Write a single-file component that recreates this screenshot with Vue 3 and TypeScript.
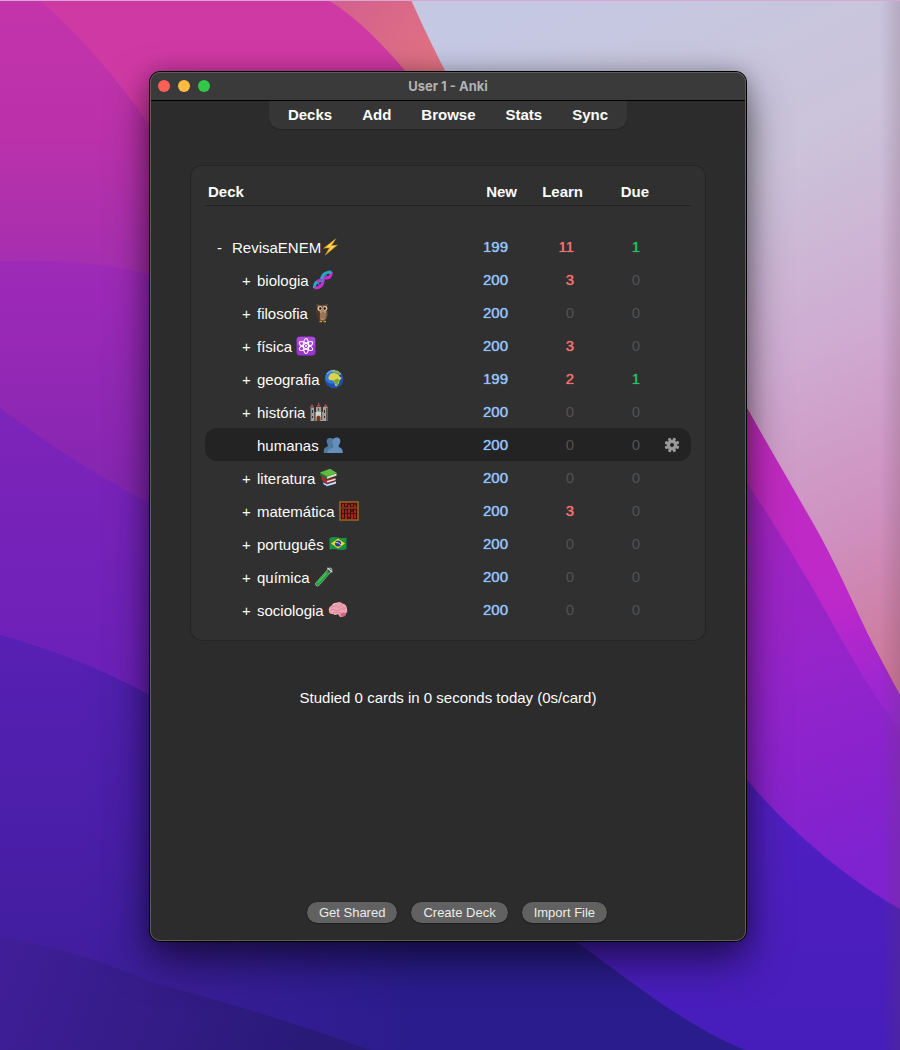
<script setup lang="ts">
import { ref } from 'vue'

interface Deck {
  name: string
  icon: string
  toggle: string
  depth: number
  fresh: number
  learn: number
  due: number
}

const menu = ['Decks', 'Add', 'Browse', 'Stats', 'Sync']
const actions = ['Get Shared', 'Create Deck', 'Import File']

const decks: Deck[] = [
  { name: 'RevisaENEM', icon: 'bolt', toggle: '-', depth: 0, fresh: 199, learn: 11, due: 1 },
  { name: 'biologia', icon: 'dna', toggle: '+', depth: 1, fresh: 200, learn: 3, due: 0 },
  { name: 'filosofia', icon: 'owl', toggle: '+', depth: 1, fresh: 200, learn: 0, due: 0 },
  { name: 'física', icon: 'atom', toggle: '+', depth: 1, fresh: 200, learn: 3, due: 0 },
  { name: 'geografia', icon: 'globe', toggle: '+', depth: 1, fresh: 199, learn: 2, due: 1 },
  { name: 'história', icon: 'castle', toggle: '+', depth: 1, fresh: 200, learn: 0, due: 0 },
  { name: 'humanas', icon: 'people', toggle: '', depth: 1, fresh: 200, learn: 0, due: 0 },
  { name: 'literatura', icon: 'books', toggle: '+', depth: 1, fresh: 200, learn: 0, due: 0 },
  { name: 'matemática', icon: 'abacus', toggle: '+', depth: 1, fresh: 200, learn: 3, due: 0 },
  { name: 'português', icon: 'flag', toggle: '+', depth: 1, fresh: 200, learn: 0, due: 0 },
  { name: 'química', icon: 'tube', toggle: '+', depth: 1, fresh: 200, learn: 0, due: 0 },
  { name: 'sociologia', icon: 'brain', toggle: '+', depth: 1, fresh: 200, learn: 0, due: 0 },
]

const active = ref('humanas')
const teeth = [0, 45, 90, 135, 180, 225, 270, 315]
</script>

<template>
  <div class="desktop">
    <svg class="wallpaper" viewBox="0 0 900 1050" preserveAspectRatio="none" aria-hidden="true">
      <defs>
        <linearGradient id="w-a" gradientUnits="userSpaceOnUse" x1="0" y1="0" x2="0" y2="275">
          <stop offset="0" stop-color="#c434ab" />
          <stop offset="0.5" stop-color="#ba31aa" />
          <stop offset="1" stop-color="#a42fb0" />
        </linearGradient>
        <linearGradient id="w-b" gradientUnits="userSpaceOnUse" x1="0" y1="261" x2="0" y2="500">
          <stop offset="0" stop-color="#9f2ab8" />
          <stop offset="1" stop-color="#8426b0" />
        </linearGradient>
        <linearGradient id="w-c" gradientUnits="userSpaceOnUse" x1="0" y1="408" x2="0" y2="695">
          <stop offset="0" stop-color="#7e24ba" />
          <stop offset="1" stop-color="#6a20b8" />
        </linearGradient>
        <linearGradient id="w-d" gradientUnits="userSpaceOnUse" x1="0" y1="635" x2="0" y2="980">
          <stop offset="0" stop-color="#5820b4" />
          <stop offset="0.6" stop-color="#4a1ea8" />
          <stop offset="1" stop-color="#3f1e9c" />
        </linearGradient>
        <linearGradient id="w-shade" gradientUnits="userSpaceOnUse" x1="80" y1="0" x2="420" y2="0">
          <stop offset="0" stop-color="#2a1c8c" stop-opacity="0" />
          <stop offset="1" stop-color="#2a1c8c" />
        </linearGradient>
        <linearGradient id="w-e" gradientUnits="userSpaceOnUse" x1="0" y1="940" x2="300" y2="1050">
          <stop offset="0" stop-color="#401e98" />
          <stop offset="1" stop-color="#291a78" />
        </linearGradient>
        <linearGradient id="w-sky" gradientUnits="userSpaceOnUse" x1="560" y1="0" x2="880" y2="700">
          <stop offset="0" stop-color="#c5c8e3" />
          <stop offset="0.3" stop-color="#cbc3d9" />
          <stop offset="0.55" stop-color="#cfabd2" />
          <stop offset="0.78" stop-color="#cf90c0" />
          <stop offset="1" stop-color="#cd7595" />
        </linearGradient>
        <linearGradient id="w-mag" gradientUnits="userSpaceOnUse" x1="747" y1="408" x2="900" y2="730">
          <stop offset="0" stop-color="#c22cbc" />
          <stop offset="0.6" stop-color="#bd28ca" />
          <stop offset="1" stop-color="#8e26d4" />
        </linearGradient>
        <linearGradient id="w-pur" gradientUnits="userSpaceOnUse" x1="747" y1="500" x2="860" y2="860">
          <stop offset="0" stop-color="#a425c0" />
          <stop offset="0.5" stop-color="#9424cb" />
          <stop offset="1" stop-color="#7f22d0" />
        </linearGradient>
        <linearGradient id="w-blue" x1="0" y1="0" x2="0" y2="1">
          <stop offset="0" stop-color="#5420c4" />
          <stop offset="1" stop-color="#461dba" />
        </linearGradient>
        <linearGradient id="w-coral" gradientUnits="userSpaceOnUse" x1="340" y1="0" x2="440" y2="60">
          <stop offset="0" stop-color="#d4608e" />
          <stop offset="1" stop-color="#e07282" />
        </linearGradient>
        <linearGradient id="w-edge" x1="0" y1="0" x2="1" y2="0">
          <stop offset="0" stop-color="#604050" stop-opacity="0" />
          <stop offset="1" stop-color="#604050" stop-opacity="0.2" />
        </linearGradient>
      </defs>
      <rect width="900" height="1050" fill="url(#w-a)" />
      <path d="M40 0Q100 54 150 126L300 340H500V0Z" fill="#cf39a4" />
      <path d="M328 0C358 18 382 44 408 74H500V0Z" fill="url(#w-coral)" />
      <path d="M0 261Q90 258 150 275L600 420V1050H0Z" fill="url(#w-b)" />
      <path d="M0 408Q80 468 150 503L600 700V1050H0Z" fill="url(#w-c)" />
      <path d="M0 635Q75 655 150 695L600 840V1050H0Z" fill="url(#w-d)" />
      <path d="M0 635Q75 655 150 695L600 840L760 1050H0Z" fill="url(#w-shade)" />
      <path d="M0 938Q80 950 150 982Q260 1010 370 1050H0Z" fill="url(#w-e)" />
      <path d="M411 0C422 24 434 50 452 84L747 408L900 695V0Z" fill="url(#w-sky)" />
      <path d="M700 330L747 408L817 530C850 590 872 650 900 695V760H700Z" fill="url(#w-mag)" />
      <path d="M700 420L747 483Q782 535 812 587C842 640 868 690 900 730V930H700Z" fill="url(#w-pur)" />
      <path d="M560 700L747 780C785 825 840 875 900 909V1050H745C680 1023 630 980 575 941Z" fill="url(#w-blue)" />
      <rect x="880" width="20" height="1050" fill="url(#w-edge)" />
      <rect width="900" height="1" fill="#d8a8d4" />
    </svg>

    <section class="window">
      <header class="titlebar">
        <div class="lights">
          <button class="light close" aria-label="Close"></button>
          <button class="light minimize" aria-label="Minimize"></button>
          <button class="light zoom" aria-label="Zoom"></button>
        </div>
        <h1 class="title">User 1 - Anki</h1>
      </header>

      <nav class="menu">
        <a v-for="item in menu" :key="item" href="#">{{ item }}</a>
      </nav>

      <main class="content">
        <div class="card">
          <table>
            <colgroup>
              <col />
              <col class="col-new" />
              <col class="col-count" />
              <col class="col-count" />
              <col class="col-gear" />
            </colgroup>
            <thead>
              <tr>
                <th class="deck-head" scope="col">Deck</th>
                <th scope="col">New</th>
                <th scope="col">Learn</th>
                <th scope="col">Due</th>
                <td></td>
              </tr>
            </thead>
            <tbody>
              <tr class="spacer" aria-hidden="true"><td colspan="5"></td></tr>
              <tr
                v-for="deck in decks"
                :key="deck.name"
                :class="{ active: deck.name === active }"
                @mouseenter="active = deck.name"
              >
                <td>
                  <div class="deck" :class="{ child: deck.depth > 0 }">
                    <span class="toggle-slot">
                      <button v-if="deck.toggle" class="toggle" :aria-label="'Toggle ' + deck.name">{{ deck.toggle }}</button>
                    </span>
                    <a href="#" :class="{ spaced: deck.depth > 0 }">
                      <span>{{ deck.name }}</span>
                      <svg viewBox="0 0 20 20" aria-hidden="true">
                        <template v-if="deck.icon === 'bolt'">
                          <path d="M15.500 1L2 11.500L8 11L3.500 19L17 7.800L10.800 8.400Z" fill="#f0a020" />
                          <path d="M14 2.500L4.500 10.500L10.200 10L6.800 15.600L14.800 8.600L9 9.300Z" fill="#ffd95e" />
                        </template>
                        <template v-else-if="deck.icon === 'dna'">
                          <path d="M1.500 17Q2 11.500 8 10.500T18 3Q17 8 11.500 9.500T1.500 17Z" fill="#2b3f86" />
                          <path d="M4 12.500L7.500 16M12 4.500L15.500 8" stroke="#8b44d0" stroke-width="1.600" />
                          <path d="M1.500 18C1 12.500 4.500 10.800 8.500 10.500" fill="none" stroke="#1fb0c4" stroke-width="3" />
                          <path d="M1.500 18C7.500 18 10 15 10.200 10.500C10.400 7 12 8 14 8S18 6 18.500 2" fill="none" stroke="#c82ed0" stroke-width="3" />
                          <path d="M8 11.500C8.800 7 10 2 18.500 2" fill="none" stroke="#25a9c2" stroke-width="3.200" />
                          <path d="M4 11.800Q6 9.500 9.500 10" fill="none" stroke="#c82ed0" stroke-width="2.400" />
                        </template>
                        <template v-else-if="deck.icon === 'owl'">
                          <path d="M4.500 1L8 2H12L15.500 1L15 7Q17 13 13 18H8Q3 12 5 6Z" fill="#74513a" />
                          <path d="M8 8H14Q15 14 12 17H9Q6.500 13 8 8Z" fill="#b08f6a" />
                          <path d="M9 10V15M11 9V16M13 10V15" stroke="#6e5039" stroke-width="0.800" />
                          <path d="M5 7Q3 14 7.500 18L8 10Z" fill="#4c3224" />
                          <circle cx="8" cy="5.500" r="2.400" fill="#dbc5a3" />
                          <circle cx="13" cy="5.500" r="2.400" fill="#dbc5a3" />
                          <circle cx="8.300" cy="5.500" r="1.200" fill="#20140e" />
                          <circle cx="12.700" cy="5.500" r="1.200" fill="#20140e" />
                          <path d="M10 6.500H11.200L10.500 8.500Z" fill="#d8a93c" />
                          <path d="M7.500 18.700H10M11.500 18.700H14" stroke="#c99a4a" stroke-width="1.200" />
                        </template>
                        <template v-else-if="deck.icon === 'atom'">
                          <rect x="0.500" y="0.500" width="19" height="19" rx="3.500" fill="#9c35cf" />
                          <rect x="1" y="1" width="18" height="9" rx="3" fill="#ad4cdb" />
                          <g fill="none" stroke="#fff" stroke-width="1.100">
                            <ellipse cx="10" cy="10" rx="2.500" ry="7.500" />
                            <ellipse cx="10" cy="10" rx="2.500" ry="7.500" transform="rotate(60 10 10)" />
                            <ellipse cx="10" cy="10" rx="2.500" ry="7.500" transform="rotate(120 10 10)" />
                          </g>
                          <circle cx="10" cy="10" r="1.100" fill="#fff" />
                        </template>
                        <template v-else-if="deck.icon === 'globe'">
                          <circle cx="10" cy="10" r="9.300" fill="#1f4fb0" />
                          <circle cx="8" cy="8" r="6.800" fill="#3279d8" />
                          <path d="M5 7L6.500 4.500L10 4L14 5L15.500 7.500L17.800 9L15.500 11.500L15 14L12.800 17.300L11 16.500L10.300 12.500L8.500 11.300L5.500 11L4.200 9Z" fill="#dcd24e" />
                          <path d="M10 11L14 9.500L15 12L12.800 16.500L11.200 15Z" fill="#6aa844" />
                          <path d="M7 3L10 1.200L14 1.800L17.500 5L15.800 6.200L13.500 4.200L10 3.500Z" fill="#8fb54e" />
                          <path d="M3 5Q6 1 11 1.200" fill="none" stroke="#a9d0f5" stroke-width="0.800" />
                        </template>
                        <template v-else-if="deck.icon === 'castle'">
                          <path d="M1 5.500H5V10H7V5H12V10H14V5H18.500V19H1Z" fill="#a5a19d" />
                          <path d="M1 5.500H2.200V19H1ZM5 9H6.500V19H5ZM12 5H13.200V18H12ZM17 6H18.500V19H17Z" fill="#5c5855" />
                          <path d="M7 10H12V19H7Z" fill="#d5d1cb" />
                          <path d="M7.500 19V15Q9.500 12 11.500 15V19Z" fill="#793817" />
                          <path d="M5.200 6H6.800V10H5.200ZM12.500 3H13.500V9H12.500Z" fill="#303030" />
                          <path d="M3 5V2M9.500 4V0.500M16.500 5V2" stroke="#767270" stroke-width="0.700" />
                          <path d="M1 5H5L3 2.500ZM7.500 4.500H12L9.800 1.500ZM14.500 5H19L16.500 2Z" fill="#bc4544" />
                          <path d="M3.500 8V11M9.500 6.500V8.500M15.500 8V11M3.500 14V16M15.500 14V16" stroke="#37322f" stroke-width="1.100" />
                        </template>
                        <template v-else-if="deck.icon === 'people'">
                          <path d="M6.500 3C10 2.500 11 5 10.500 7.500Q10 9.500 9.500 11H14V18H0.800Q0 12.800 4.200 11.800Q5.500 11 4.500 9.500Q2 3.500 6.500 3Z" fill="#52799f" />
                          <path d="M13 2.500C17 2.200 18 4.800 17 8Q16 10 15.500 11Q15.500 12 17 12.500Q19.800 13.500 19.800 18H4Q4 13.800 8 13Q10.500 12.500 10 11Q7.500 3 13 2.500Z" fill="#648fbc" />
                          <path d="M4 18Q4 13.800 8 13Q10.500 12.500 10 11" fill="none" stroke="#4d749b" stroke-width="0.700" />
                        </template>
                        <template v-else-if="deck.icon === 'books'">
                          <path d="M3.500 12L13 14L17 12V16L8 19L4 16.500Z" fill="#294c86" />
                          <path d="M4.500 14.500L8 16.500L17 13.500V15.500L8 18L4.500 16Z" fill="#e6e3dc" />
                          <path d="M2.500 8L8 12L16.500 9.500V12.500L8 15.500L2.500 11.800Z" fill="#c32423" />
                          <path d="M8 13L16.500 10.500V12L8 14.500Z" fill="#eee9e1" />
                          <path d="M1 4.800L11 1L17.500 5V8L8 11.500L1 7Z" fill="#2d7333" />
                          <path d="M8 8.800L17.500 5.500V7.500L8 10.800Z" fill="#dfe2d2" />
                          <path d="M1 4.500L11 0.800L17.800 5L8 8.500Z" fill="#62b943" />
                        </template>
                        <template v-else-if="deck.icon === 'abacus'">
                          <rect x="1" y="1" width="18" height="18" fill="#35110d" stroke="#9c611d" stroke-width="1.600" />
                          <path d="M2 7H18" stroke="#9c611d" />
                          <path d="M4 2V18M7 2V18M10 2V18M13 2V18M16 2V18" stroke="#7c301b" stroke-width="0.600" />
                          <path d="M4 3V6M7 2.500V5M10 4V6.500M13 3V5.500M16 4V6.500M4 8.500V17M7 9.500V18M10 8.500V16M13 11V18M16 9V17" stroke="#b3201a" stroke-width="1.900" />
                          <path d="M2.500 12.500H17.500" stroke="#35110d" stroke-width="0.800" />
                        </template>
                        <template v-else-if="deck.icon === 'flag'">
                          <path d="M1.500 4Q6 2.500 10 3.500T18.500 3.500V15Q14 16.500 10 15.500T1.500 15.500Z" fill="#199245" />
                          <path d="M3 9.500L10 4.500L17 9.500L10 14.500Z" fill="#f5d62b" />
                          <circle cx="10" cy="9.500" r="3.100" fill="#253d91" />
                          <path d="M7.300 8.500Q10.500 8 12.700 10.700" fill="none" stroke="#e4eafa" stroke-width="0.900" />
                        </template>
                        <template v-else-if="deck.icon === 'tube'">
                          <path d="M16 3L3.500 17" stroke="#a9bbad" stroke-width="4.600" stroke-linecap="round" />
                          <path d="M16 3L3.500 17" stroke="#364238" stroke-width="3" stroke-linecap="round" />
                          <path d="M13.500 6L3.700 16.800" stroke="#1fa43a" stroke-width="3.600" stroke-linecap="round" />
                          <path d="M12.500 6.300L4 15.800" stroke="#65df69" stroke-width="0.900" />
                          <path d="M13.800 1.200L17.800 4.800" stroke="#cbd6cf" stroke-width="1.400" stroke-linecap="round" />
                        </template>
                        <template v-else>
                          <path d="M5 14Q1 14.500 0.800 10.500Q0.500 7 3.500 5.500Q5 2.500 8.500 2.800Q12 1 15 3.800Q18.500 4.500 19 8.500Q20 13 16.500 14L14.500 17H12L10 14Q7 16 5 14Z" fill="#f0a3b2" />
                          <path d="M12 14Q16 12 18.500 13Q18 17 13.500 17Z" fill="#ca6580" />
                          <path d="M3 8Q5 5 7.500 6.500M6.500 4Q9 4 9.500 6.500T13 6M12 3.500Q14 4 14.500 6.500T18 8M2 11Q5 8 7.500 10T12 9.500Q14 7 16.500 10M5 13Q8 11 10.500 12.500T16 12.500" fill="none" stroke="#d07f95" stroke-width="0.800" />
                          <path d="M5 5Q7 3 9 3.700" fill="none" stroke="#ffd2da" stroke-width="0.800" />
                        </template>
                      </svg>
                    </a>
                  </div>
                </td>
                <td class="count new">{{ deck.fresh }}</td>
                <td class="count" :class="deck.learn ? 'learn' : 'zero'">{{ deck.learn }}</td>
                <td class="count" :class="deck.due ? 'due' : 'zero'">{{ deck.due }}</td>
                <td class="gear-cell">
                  <button v-if="deck.name === active" class="gear" aria-label="Deck options">
                    <svg viewBox="-8 -8 16 16" aria-hidden="true">
                      <rect
                        v-for="angle in teeth"
                        :key="angle"
                        x="-1.500"
                        y="-7.400"
                        width="3"
                        height="4"
                        rx="0.700"
                        :transform="`rotate(${angle + 22})`"
                        fill="#999"
                      />
                      <circle r="3.600" fill="none" stroke="#999" stroke-width="3.200" />
                    </svg>
                  </button>
                </td>
              </tr>
            </tbody>
          </table>
        </div>
        <p class="studied">Studied 0 cards in 0 seconds today (0s/card)</p>
      </main>

      <footer class="actions">
        <button v-for="action in actions" :key="action">{{ action }}</button>
      </footer>
    </section>
  </div>
</template>

<style>
body {
  margin: 0;
}
</style>

<style scoped>
.desktop {
  position: relative;
  display: flex;
  box-sizing: border-box;
  min-height: 100vh;
  padding: 71px 153px 108px 149px;
  overflow: hidden;
  color: #fcfcfc;
  font: 15px/18px "Liberation Sans", Arial, sans-serif;
}

.wallpaper {
  position: absolute;
  inset: 0;
  width: 100%;
  height: 100%;
}

a {
  color: inherit;
  text-decoration: none;
}

button {
  padding: 0;
  border: 0;
  background: none;
  color: inherit;
  font: inherit;
}

.window {
  position: relative;
  display: flex;
  flex: 1;
  flex-direction: column;
  box-sizing: border-box;
  min-width: 0;
  border: 1px solid #000;
  border-radius: 11px;
  background: #2c2c2c;
  box-shadow: 0 18px 40px rgba(0, 0, 0, 0.55), 0 0 20px rgba(0, 0, 0, 0.2);
}

.window::after {
  content: "";
  position: absolute;
  inset: 0;
  border: 1px solid #5c5c5c;
  border-radius: 10px;
  pointer-events: none;
}

.titlebar {
  display: grid;
  grid-template-columns: 1fr auto 1fr;
  align-items: center;
  height: 28px;
  border-bottom: 1px solid #000;
  border-radius: 10px 10px 0 0;
  background: #3a3a3a;
}

.lights {
  display: flex;
  gap: 8px;
  padding-left: 8px;
}

.light {
  width: 12px;
  height: 12px;
  border-radius: 50%;
}

.close {
  background: #ff5f57;
}

.minimize {
  background: #febb40;
}

.zoom {
  background: #33c748;
}

.title {
  margin: 0;
  color: #b2b2b2;
  font: 700 13px/16px Inter, sans-serif;
}

.menu {
  display: flex;
  gap: 30px;
  align-self: center;
  padding: 5px 19px;
  border-radius: 0 0 12px 12px;
  background: #363636;
  box-shadow: 0 1px 1px #242424;
  font-weight: 700;
}

.content {
  flex: 1;
  padding: 36px 40px 0;
}

.card {
  padding: 14px;
  border: 1px solid #252525;
  border-radius: 12px;
  background: #303030;
}

table {
  width: 100%;
  border-spacing: 0;
  table-layout: fixed;
}

.col-new {
  width: 60px;
}

.col-count {
  width: 66px;
}

.col-gear {
  width: 42px;
}

th,
td {
  padding: 0;
}

thead th,
thead td {
  height: 23px;
  padding-bottom: 2px;
  border-bottom: 1px solid #222;
  text-align: right;
}

thead .deck-head {
  padding-left: 3px;
  text-align: left;
}

.spacer td {
  height: 24px;
}

tbody td {
  height: 33px;
}

.active td {
  background: #232323;
}

.active td:first-child {
  border-radius: 12px 0 0 12px;
}

.active td:last-child {
  border-radius: 0 12px 12px 0;
}

.deck {
  display: flex;
  align-items: center;
  padding-left: 12px;
}

.child {
  padding-left: 37px;
}

.toggle-slot {
  width: 15px;
  padding-top: 2px;
}

.toggle {
  display: block;
}

.deck a {
  display: flex;
  align-items: center;
}

.deck a span {
  padding-top: 2px;
}

.deck svg {
  width: 20px;
  height: 20px;
}

.spaced {
  gap: 4px;
}

.count {
  padding-right: 9px;
  text-align: right;
}

.new {
  color: #93c5fd;
  text-shadow: 0 0 1px #93c5fd;
}

.learn {
  color: #f87171;
  text-shadow: 0 0 1px #f87171;
}

.due {
  color: #22c55e;
  text-shadow: 0 0 1px #22c55e;
}

.zero {
  color: #525252;
}

.gear-cell {
  padding-left: 3px;
  text-align: center;
}

.gear {
  display: block;
  width: 16px;
  height: 16px;
  margin: 0 auto;
}

.gear svg {
  display: block;
}

.studied {
  margin: 48px 0 0;
  text-align: center;
}

.actions {
  display: flex;
  gap: 14px;
  justify-content: center;
  padding: 0 0 18px 18px;
}

.actions button {
  height: 21px;
  padding: 0 12px;
  border-radius: 11px;
  background: #616161;
  box-shadow: 0 0 1px #111, 0 1px 1px #222;
  color: #ececec;
  font-size: 13px;
}
</style>
